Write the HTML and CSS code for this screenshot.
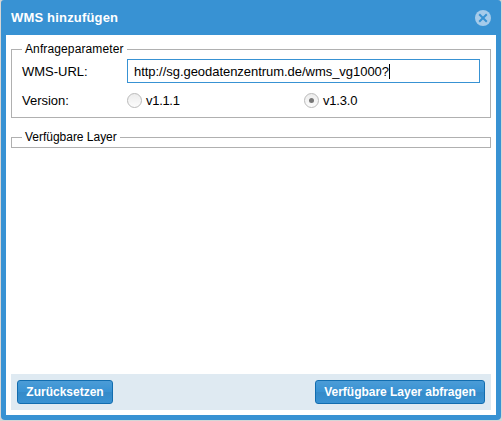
FILE: index.html
```html
<!DOCTYPE html>
<html lang="de">
<head>
<meta charset="utf-8">
<title>WMS hinzufügen</title>
<link rel="stylesheet" href="styles.css">
</head>
<body>
<section class="window">
  <header class="titlebar">
    <h1 class="title">WMS hinzufügen</h1>
    <svg class="close" width="16" height="16" viewBox="0 0 16 16">
      <circle cx="8" cy="8" r="8" fill="#a5cbea"/>
      <path d="M4.2 4.2l7.6 7.6M11.8 4.2l-7.6 7.6" stroke="#3892d3" stroke-width="2"/>
    </svg>
  </header>
  <main class="content">
    <fieldset class="group params">
      <legend class="legend legend-params">Anfrageparameter</legend>
      <div class="row url-row">
        <span class="label">WMS-URL:</span>
        <div class="input"><span class="url">http://sg.geodatenzentrum.de/wms_vg1000?</span><span class="caret"></span></div>
      </div>
      <div class="row version-row">
        <span class="label">Version:</span>
        <span class="option"><span class="radio"></span><span class="option-text first">v1.1.1</span></span>
        <span class="option"><span class="radio checked"></span><span class="option-text">v1.3.0</span></span>
      </div>
    </fieldset>
    <fieldset class="group layers">
      <legend class="legend legend-layers">Verfügbare Layer</legend>
    </fieldset>
    <footer class="footer">
      <button class="button reset">Zurücksetzen</button>
      <button class="button query">Verfügbare Layer abfragen</button>
    </footer>
  </main>
</section>
</body>
</html>
```
FILE: styles.css
```css
* { box-sizing: border-box; }

body {
  margin: 0;
  height: 421px;
  padding: 0 1px 1px;
  overflow: hidden;
  background: #d6d6d6;
  color: #000;
  font: 13px/16px "Liberation Sans", Arial, sans-serif;
}

.window {
  display: flex;
  flex-direction: column;
  height: 420px;
  padding: 0 5px 5px;
  border-radius: 3px 3px 4px 4px;
  background: #3892d3;
}

.titlebar {
  display: flex;
  align-items: center;
  justify-content: space-between;
  height: 35px;
  padding: 0 5px;
  color: #fff;
}

.title {
  margin: 0;
  font-size: 13px;
  line-height: 16px;
  letter-spacing: 0.18px;
}

.close { display: block; }

.content {
  display: flex;
  flex: 1;
  flex-direction: column;
  padding: 5px;
  background: #fff;
}

.group {
  min-width: 0;
  margin: 0;
  padding: 0 10px;
  border: 1px solid #b0b0b0;
}

.params { height: 77px; margin-top: 1px; }

.layers { height: 19px; margin-top: 11px; }

.legend {
  height: 17px;
  padding: 0 3px;
  font-size: 12px;
  line-height: 17px;
  white-space: nowrap;
}

.legend-params { width: 105px; letter-spacing: 0.12px; }

.legend-layers { width: 98px; letter-spacing: -0.02px; }

.row { display: flex; align-items: center; }

.url-row { height: 24px; margin-top: 1px; }

.version-row { height: 24px; margin-top: 5px; }

.label {
  flex: none;
  width: 105px;
  padding-top: 2px;
  letter-spacing: -0.02px;
}

.input {
  display: flex;
  align-items: center;
  width: 353px;
  height: 24px;
  padding: 1px 6px 0;
  border: 1px solid #3892d3;
  background: #fff;
}

.url { letter-spacing: -0.04px; white-space: nowrap; }

.caret { width: 1px; height: 15px; background: #000; }

.option {
  display: flex;
  flex: none;
  align-items: center;
  gap: 4px;
  width: 177px;
}

.option:last-child { width: 176px; }

.option-text { padding-top: 1px; letter-spacing: -0.2px; }

.first { letter-spacing: -0.3px; }

.radio {
  display: flex;
  flex: none;
  align-items: center;
  justify-content: center;
  width: 15px;
  height: 15px;
  border: 1px solid #bababa;
  border-radius: 50%;
  background: linear-gradient(#ececec, #fcfcfc);
}

.checked::after {
  width: 5px;
  height: 5px;
  border-radius: 50%;
  background: #777;
  content: "";
}

.footer {
  display: flex;
  align-items: center;
  justify-content: space-between;
  height: 36px;
  margin-top: auto;
  padding: 0 6px;
  background: #dfeaf2;
}

.button {
  height: 24px;
  padding: 0;
  border: 1px solid #126daf;
  border-radius: 3px;
  background: linear-gradient(#4b9cd7, #3892d3 50%, #358ac8 51%, #3892d3);
  color: #fff;
  font: bold 12px/16px "Liberation Sans", Arial, sans-serif;
  white-space: nowrap;
}

.reset { width: 96px; }

.query { width: 170px; letter-spacing: -0.02px; }
```
